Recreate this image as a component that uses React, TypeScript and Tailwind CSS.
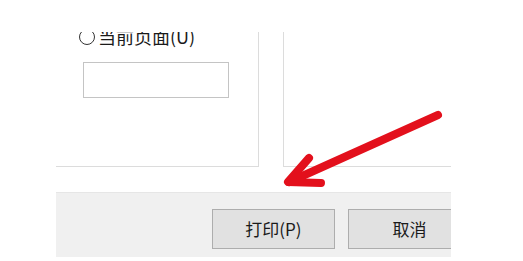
export default function App() {
  return (
    <div
      className="relative w-[523px] h-[261px] overflow-hidden bg-white text-[#1a1a1a]"
      style={{ fontFamily: '"Noto Sans CJK SC", "Noto Sans", sans-serif' }}
    >
      {/* 对话框（裁切后的可见部分） */}
      <div className="ml-[56px] mt-[32px] w-[395px] h-[225px] overflow-hidden flex flex-col">
        <div className="flex h-[135px] shrink-0">
          {/* 页面范围 */}
          <div className="w-[203px] border-r border-b border-[#dcdcdc]">
            <div className="-mt-[6px] ml-[23px] flex h-[20px] items-center gap-[3px]">
              <span className="w-[16px] h-[16px] mt-[2px] rounded-full border border-[#333] bg-white" />
              <span className="text-[18px] leading-none">当前页面(U)</span>
            </div>
            <div className="ml-[27px] mt-[16px] w-[146px] h-[36px] border border-[#c4c4c4] bg-white" />
          </div>
          <div className="w-[24px]" />
          {/* 预览 */}
          <div className="flex-1 border-l border-b border-[#dcdcdc]" />
        </div>
        <div className="h-[25px] shrink-0" />
        {/* 底部按钮栏 */}
        <div className="flex-1 bg-[#f0f0f0] border-t border-[#e6e6e6] pt-[16px] pl-[156px] flex gap-[13px]">
          <button className="w-[123px] h-[40px] shrink-0 border border-[#adadad] bg-[#e1e1e1] text-[17px]">
            打印(P)
          </button>
          <button className="w-[123px] h-[40px] shrink-0 border border-[#adadad] bg-[#e1e1e1] text-[17px]">
            取消
          </button>
        </div>
      </div>

      {/* 红色箭头标注 */}
      <svg className="absolute left-0 top-0" width="523" height="261" viewBox="0 0 523 261">
        <g stroke="#e3101c" strokeWidth="8" strokeLinecap="round" strokeLinejoin="round" fill="none">
          <path d="M438 115 L289 182" />
          <path d="M309 158 L288 182 L321 183" />
        </g>
      </svg>
    </div>
  );
}
